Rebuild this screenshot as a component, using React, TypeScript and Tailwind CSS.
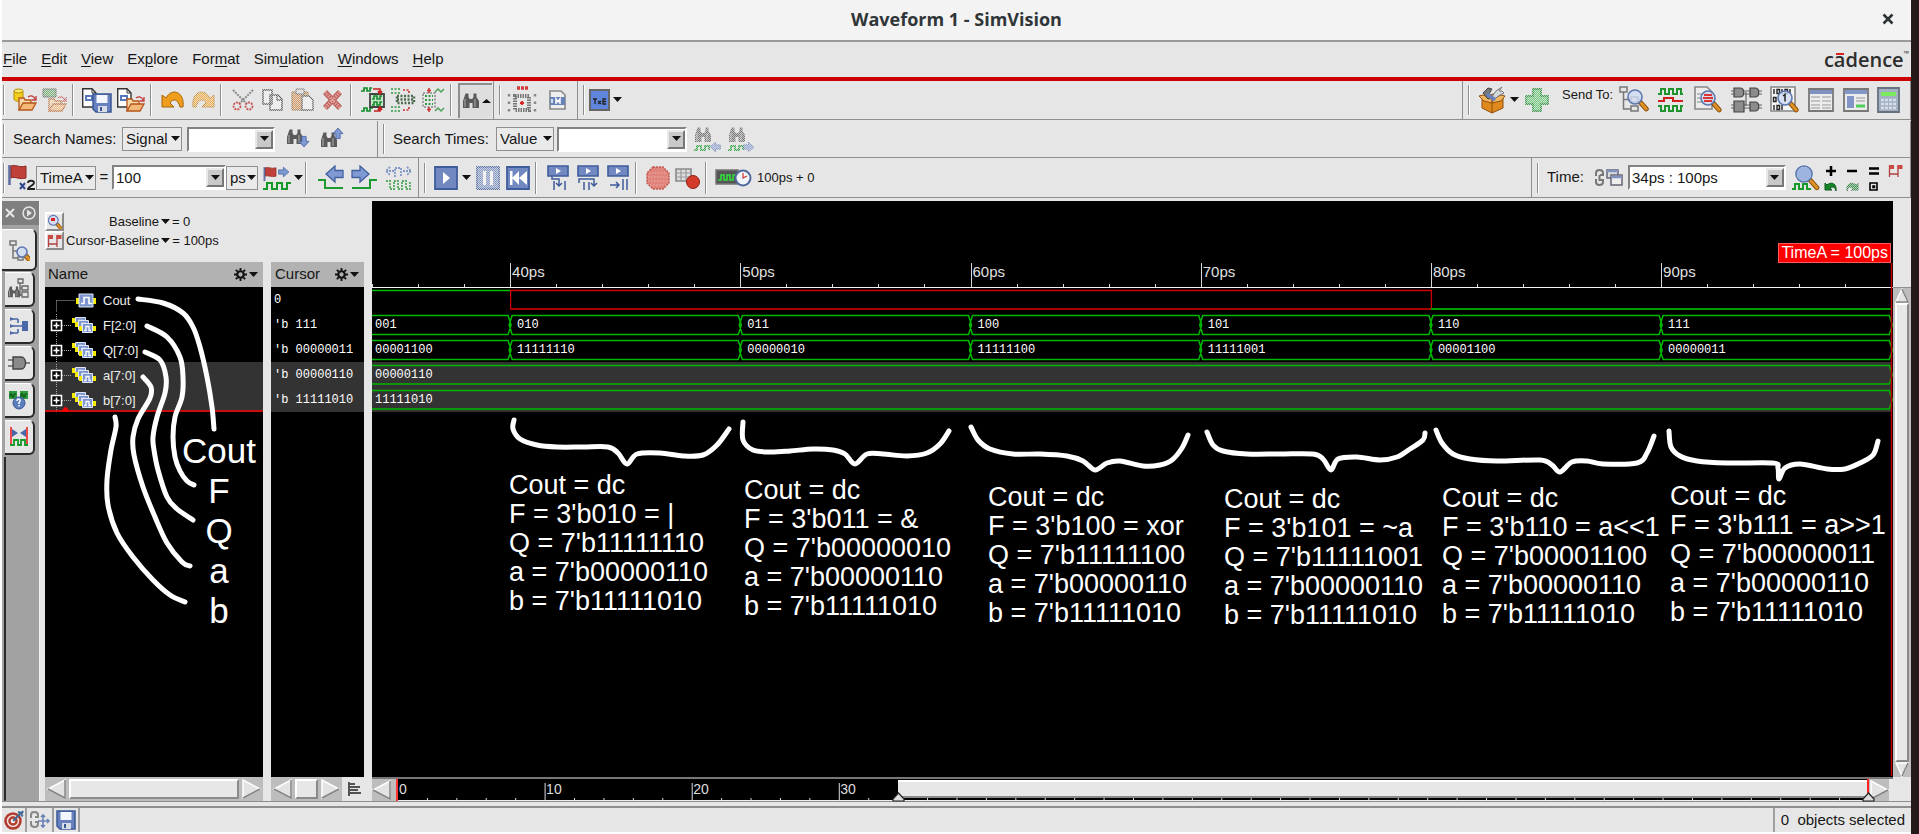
import React from "react";

type Kids = { children?: React.ReactNode };
type Pt = [number, number];

/* ---------- helpers ---------- */

function smooth(points: Pt[]): string {
  let d = `M${points[0][0]} ${points[0][1]}`;
  for (let i = 0; i < points.length - 1; i++) {
    const p0 = points[Math.max(0, i - 1)];
    const p1 = points[i];
    const p2 = points[i + 1];
    const p3 = points[Math.min(points.length - 1, i + 2)];
    const c1 = [p1[0] + (p2[0] - p0[0]) / 6, p1[1] + (p2[1] - p0[1]) / 6];
    const c2 = [p2[0] - (p3[0] - p1[0]) / 6, p2[1] - (p3[1] - p1[1]) / 6];
    d += ` C${c1[0]} ${c1[1]} ${c2[0]} ${c2[1]} ${p2[0]} ${p2[1]}`;
  }
  return d;
}

function Svg({ w, h, dim, children }: Kids & { w: number; h: number; dim?: boolean }) {
  return (
    <svg width={w} height={h} viewBox={`0 0 ${w} ${h}`} fill="none" aria-hidden="true" className="shrink-0">
      {dim ? <g mask="url(#dither)">{children}</g> : children}
    </svg>
  );
}

/* ---------- drawing parts ---------- */

const Folder = ({ x, y }: { x: number; y: number }) => (
  <g transform={`translate(${x} ${y})`}>
    <path d="M1 14V2h5l1 2h6v3" fill="#f9d9a8" stroke="#b5551a" strokeWidth="1.3" />
    <path d="M1 14L5 7h13l-4 7z" fill="#f4b878" stroke="#b5551a" strokeWidth="1.3" />
    <path d="M10 1c3-2 6-1 7 2m1-3v4h-4" stroke="#c23b3b" strokeWidth="1.3" />
  </g>
);

const Page = ({ x, y }: { x: number; y: number }) => (
  <g transform={`translate(${x} ${y})`}>
    <path d="M.7 .7H10L14 5v14H.7z" fill="#fff" stroke="#333" strokeWidth="1.4" />
    <path d="M10 .7V5h4" stroke="#333" />
    <path d="M3 7h8v6H3z" fill="#5577bb" />
    <path d="M5 9v2h4V9z" fill="#fff" />
  </g>
);

const Disk = ({ x, y, s = 1 }: { x: number; y: number; s?: number }) => (
  <g transform={`translate(${x} ${y}) scale(${s})`}>
    <path d="M1 1h18v18H4l-3-3z" fill="#6681bd" stroke="#3a5795" strokeWidth="1.5" />
    <path d="M4.500 2h11v8h-11z" fill="#f3f6fc" />
    <path d="M6 13h9v6H6z" fill="#d9dde6" />
    <path d="M8 14h2v4H8z" fill="#3a5795" />
  </g>
);

const Lens = ({ x, y, r = 7 }: { x: number; y: number; r?: number }) => (
  <g transform={`translate(${x} ${y})`}>
    <path d={`M${r * 0.8} ${r * 0.8}L${r * 1.6} ${r * 1.7}`} stroke="#8a4d0c" strokeWidth="5" strokeLinecap="round" />
    <path d={`M${r * 0.9} ${r * 0.9}L${r * 1.6} ${r * 1.7}`} stroke="#dd9124" strokeWidth="3" strokeLinecap="round" />
    <circle r={r} fill="#cfdcf3" fillOpacity=".8" stroke="#5c76b0" strokeWidth="1.6" />
  </g>
);

const Glasses = ({ x, y }: { x: number; y: number }) => (
  <g transform={`translate(${x} ${y})`} fill="#5a5a5a">
    <path d="M2.500 .500h3v3.500l1 1.500v9.500H0V8z" />
    <path d="M10.500 .500h3v3.500L16 8v7H9.500V5.500l1-1.500z" />
    <path d="M6 6h4v4H6z" />
    <path d="M2 6v8M12 6v8" stroke="#a2a2a2" strokeWidth="1.200" />
  </g>
);

const FatArrow = ({ x, y, a = 0, s = 1 }: { x: number; y: number; a?: number; s?: number }) => (
  <path
    transform={`translate(${x} ${y}) rotate(${a}) scale(${s})`}
    d="M-9-3.500H-1V-8L8 0L-1 8V3.500H-9z"
    fill="#7f9ad2"
    stroke="#42609f"
    strokeWidth="1.300"
  />
);

const Flag = ({ x, y }: { x: number; y: number }) => (
  <g transform={`translate(${x} ${y})`}>
    <path d="M1.500 0V20" stroke="#5d6fa3" strokeWidth="2.600" />
    <path d="M3 1c4-2 8 2 15 0v12c-7 2-11-2-15 0z" fill="#bf4038" stroke="#8d2a26" />
  </g>
);

const Tree = () => (
  <path
    d="M1 1h7v5H1zM12 11h7v5h-7zM12 20h7v5h-7zM4.500 6v17H12M4.500 13.500H12"
    fill="none"
    stroke="#777"
    strokeWidth="1.500"
  />
);

const Caret = ({ up }: { up?: boolean }) => (
  <svg width="9" height="6" viewBox="0 0 9 6" aria-hidden="true" className="shrink-0">
    <path d={up ? "M0 5L4.500 1L9 5z" : "M0 0H9L4.500 5z"} fill="#111" />
  </svg>
);

/* ---------- toolbar icons ---------- */

const icons = {
  openDb: (
    <Svg w={26} h={26}>
      <path d="M2 4v8c0 3 9 3 9 0V4" fill="#f2cf1c" stroke="#b18a00" />
      <ellipse cx="6.500" cy="4" rx="4.500" ry="2" fill="#fbe96b" stroke="#b18a00" />
      <Folder x={6} y={9} />
    </Svg>
  ),
  openWave: (
    <Svg w={26} h={26} dim>
      <path d="M1 2h13v8H1z" fill="#62a862" stroke="#444" />
      <Folder x={6} y={10} />
    </Svg>
  ),
  saveAs: (
    <Svg w={32} h={27}>
      <Page x={1} y={1} />
      <Disk x={11} y={6} />
    </Svg>
  ),
  openPage: (
    <Svg w={32} h={27}>
      <Page x={2} y={1} />
      <Folder x={11} y={10} />
    </Svg>
  ),
  undo: (
    <Svg w={24} h={22}>
      <path d="M1 6v12h12l-4-4c3-5 8-4 10 4h3C24 3 11-2 5 9z" fill="#ef9d1c" stroke="#a9650a" />
    </Svg>
  ),
  redo: (
    <Svg w={24} h={22} dim>
      <path d="M23 6v12H11l4-4c-3-5-8-4-10 4H2C0 3 13-2 19 9z" fill="#f2a62c" stroke="#b0700f" />
    </Svg>
  ),
  cut: (
    <Svg w={24} h={24}>
      <path d="M2 2l14 14M22 2L8 16" stroke="#8a8a8a" strokeWidth="2" strokeDasharray="2 1" />
      <circle cx="6" cy="18" r="3.500" stroke="#c75555" strokeWidth="1.800" strokeDasharray="2 1" />
      <circle cx="18" cy="18" r="3.500" stroke="#c75555" strokeWidth="1.800" strokeDasharray="2 1" />
    </Svg>
  ),
  copy: (
    <Svg w={24} h={24} dim>
      <path d="M2 2h9v14H2zM9 7h8l4 4v11H9z" fill="#f6f6f6" stroke="#333" strokeWidth="1.500" />
      <path d="M16 7v5h5" stroke="#333" strokeWidth="1.300" />
    </Svg>
  ),
  paste: (
    <Svg w={24} h={24} dim>
      <path d="M1 4h16v18H1z" fill="#cf8a48" stroke="#8a5522" />
      <path d="M5 1h8v5H5z" fill="#ddd" stroke="#444" />
      <path d="M11 8h7l4 4v10H11z" fill="#f6f6f6" stroke="#444" strokeWidth="1.500" />
    </Svg>
  ),
  remove: (
    <Svg w={22} h={22}>
      <path d="M3 3l15 16M18 3L3 19" stroke="#b95f5a" strokeWidth="5.500" />
      <path d="M3 3l15 16M18 3L3 19" stroke="#e29c98" strokeWidth="3.500" strokeDasharray="1.500 1" />
    </Svg>
  ),
  waveIn: (
    <Svg w={26} h={26}>
      <path d="M1 4h3V1h3v3h3V1h2M1 24h3v-3h3v3h3v-3h3" stroke="#128a2c" strokeWidth="1.700" />
      <path d="M10 7h14v13H10z" fill="#c9e6cb" stroke="#444" strokeWidth="1.800" />
      <path d="M12 12h2V9h3v3h3V9h2M12 18h2v-3h3v3h3v-3h2" stroke="#128a2c" strokeWidth="1.600" />
      <path d="M13 2h7v4m-2-2l2 3l2-3M14 24h6v-3m-2 2l2-3l2 3" stroke="#c81e1e" strokeWidth="1.600" />
    </Svg>
  ),
  waveMid: (
    <Svg w={26} h={26}>
      <g strokeDasharray="2 1.500" strokeWidth="1.600">
        <path d="M1 2h10M1 6h10M1 20h10M1 24h10" stroke="#2f9a3f" />
        <path d="M13 3h6v4M13 23h6v-4" stroke="#c93030" />
        <path d="M7 9h17v7H7zM7 12.500h17" stroke="#4c6b4f" strokeWidth="2.500" />
      </g>
    </Svg>
  ),
  waveOut: (
    <Svg w={26} h={26}>
      <path d="M3 6h12v14H3z" stroke="#888" strokeWidth="1.500" strokeDasharray="2 1.500" />
      <path d="M5 9h8M5 13h8M5 17h8" stroke="#2f9a3f" strokeWidth="2" strokeDasharray="2 1.500" />
      <path d="M15 5l3-3l3 3l3-3M15 24l3-3l3 3l3-3" stroke="#4aa257" strokeWidth="1.500" />
      <path d="M9 1v5M7 3.500h4M9 20v5M7 22.500h4" stroke="#c93030" strokeWidth="1.500" />
    </Svg>
  ),
  glasses: (
    <Svg w={18} h={18}>
      <Glasses x={1} y={1} />
    </Svg>
  ),
  chip: (
    <Svg w={30} h={30}>
      <path d="M10 3h11" stroke="#cf3a3a" strokeWidth="3.500" strokeDasharray="3 1" />
      <path d="M8 11h14v14H8z" stroke="#777" strokeWidth="4" strokeDasharray="1.500 1" />
      <path d="M2 9v20M28 9v20" stroke="#888" strokeWidth="2.500" strokeDasharray="2.500 5" />
      <path d="M15 16v4M13 18h4" stroke="#d22" strokeWidth="1.800" />
    </Svg>
  ),
  mPage: (
    <Svg w={18} h={22}>
      <path d="M1 2h11l4 4v14H1z" fill="#eee" stroke="#888" strokeWidth="1.600" />
      <path d="M1 8h15v8H1z" fill="#6783b8" />
      <path d="M3 10v4M7 15v-5l2 3l2-3v5" stroke="#fff" strokeWidth="1.500" />
    </Svg>
  ),
  box: (
    <Svg w={28} h={28}>
      <path d="M4 12L15 8l10 4v10l-11 5L4 22z" fill="#e08a1e" stroke="#91500c" />
      <path d="M1 10l5 5 8 2V13L5 9zM27 10l-4 5-9 2V13l9-4z" fill="#f2b65f" stroke="#91500c" />
      <path d="M5 7l5-5 4 1-3 5 3 4-4 1z" fill="#777" stroke="#444" />
      <path d="M24 1l-3 4h3l2 2-4 2-7 5-2-2 5-7z" fill="#d5d8dc" stroke="#777" />
      <path d="M9 8l8 6" stroke="#6a80b8" strokeWidth="4" />
      <path d="M14 17v10" stroke="#91500c" />
    </Svg>
  ),
  plus: (
    <Svg w={26} h={26} dim>
      <path d="M9 2h8v7h7v8h-7v7H9v-7H2V9h7z" fill="#5bc768" stroke="#138a2b" strokeWidth="1.800" />
    </Svg>
  ),
  treeLens: (
    <Svg w={30} h={28}>
      <Tree />
      <Lens x={16} y={11} r={7} />
    </Svg>
  ),
  waves: (
    <Svg w={27} h={26}>
      <g strokeWidth="2">
        <path d="M1 7h3V2h4v5h4V2h4v5h4V2h4v5h2" stroke="#1d9430" />
        <path d="M1 14h6v-3h9v3h10" stroke="#cf2020" />
        <path d="M1 19h3v5h4v-5h4v5h4v-5h4v5h4v-5h2" stroke="#1d9430" />
      </g>
    </Svg>
  ),
  pageLens: (
    <Svg w={30} h={28}>
      <path d="M2 1h12l5 5v17H2z" fill="#ececec" stroke="#888" strokeWidth="1.600" />
      <path d="M4 8h10M4 12h10M4 16h8" stroke="#888" />
      <Lens x={15} y={12} r={7} />
      <path d="M11 9h8M10 12h10M11 15h8" stroke="#d33" strokeWidth="2" />
    </Svg>
  ),
  gates: (
    <Svg w={31} h={28}>
      <path d="M0 5h31M0 8h31M0 19h31M0 22h31M15 6v14" stroke="#666" strokeWidth="1.200" />
      <g fill="#8c8c8c" stroke="#444" strokeWidth="1.200">
        <path d="M3 2h6c5 0 5 9 0 9H3zM19 2h5c5 0 5 9 0 9h-5z" />
        <path d="M3 15h10v11H3zM19 16h5c5 0 5 9 0 9h-5z" />
      </g>
    </Svg>
  ),
  bits: (
    <Svg w={30} h={28}>
      <path d="M1 1h24v24H1z" fill="#f5f5f5" stroke="#888" strokeWidth="1.600" />
      <g stroke="#222" strokeWidth="1.400">
        <path d="M4 3v5M12 3v5M20 3v5M4 19v5M12 19v5" />
        <path d="M7 3.500h2.500v4H7zM15 3.500h2.500v4H15zM3.500 11.500H6v4H3.500zM7 19.500h2.500v4H7z" />
      </g>
      <Lens x={15} y={12} r={7} />
      <path d="M13 10l2-1.500v7" stroke="#222" strokeWidth="1.500" />
    </Svg>
  ),
  listWin: (
    <Svg w={26} h={24}>
      <path d="M1 1h24v22H1z" fill="#ececec" stroke="#777" strokeWidth="1.800" />
      <path d="M2 2h22v4H2z" fill="#7f93be" />
      <path d="M3 9h9M3 13h9M3 17h9M3 20h9M14 9h9M14 13h9M14 17h9M14 20h9" stroke="#999" />
    </Svg>
  ),
  formWin: (
    <Svg w={26} h={24}>
      <path d="M1 1h24v22H1z" fill="#ececec" stroke="#777" strokeWidth="1.800" />
      <path d="M2 2h22v4H2zM4 8h7v12H4z" fill="#8297c8" />
      <path d="M13 10h9M13 13h9" stroke="#999" />
      <path d="M13 18h9" stroke="#4fcf5a" strokeWidth="3" />
    </Svg>
  ),
  calc: (
    <Svg w={23} h={26}>
      <path d="M1 1h21v24H1z" fill="#a3b1c2" stroke="#66717f" strokeWidth="1.800" />
      <path d="M4 5h15v4H4z" fill="#7bea5f" />
      <path d="M4 13h15M4 17h15M4 21h15" stroke="#d5dde8" strokeWidth="2.500" strokeDasharray="3 1" />
    </Svg>
  ),
  findDown: (
    <Svg w={24} h={24}>
      <Glasses x={0} y={2} />
      <FatArrow x={17} y={15} a={90} s={0.62} />
    </Svg>
  ),
  findUp: (
    <Svg w={24} h={24}>
      <Glasses x={0} y={5} />
      <FatArrow x={17} y={6} a={-90} s={0.62} />
    </Svg>
  ),
  findPrev: (
    <Svg w={30} h={28} dim>
      <Glasses x={2} y={2} />
      <path d="M1 25h3v-4h4v4h4v-4h4v4" stroke="#169a2c" strokeWidth="2" />
      <FatArrow x={22} y={22} a={180} s={0.6} />
    </Svg>
  ),
  findNext: (
    <Svg w={30} h={28} dim>
      <Glasses x={2} y={2} />
      <path d="M1 25h3v-4h4v4h4v-4h4v4" stroke="#169a2c" strokeWidth="2" />
      <FatArrow x={22} y={22} s={0.6} />
    </Svg>
  ),
  flagWave: (
    <Svg w={30} h={26}>
      <g transform="scale(.7)">
        <Flag x={2} y={3} />
      </g>
      <FatArrow x={22} y={7} s={0.6} />
      <path d="M1 24h4v-6h5v6h5v-6h5v6h5v-6h4" stroke="#159a28" strokeWidth="2" />
    </Svg>
  ),
  edgePrev: (
    <Svg w={27} h={26}>
      <path d="M1 15h7v8h18" stroke="#1d9a30" strokeWidth="2" />
      <FatArrow x={17} y={9} a={180} />
    </Svg>
  ),
  edgeNext: (
    <Svg w={27} h={26}>
      <path d="M1 23h18v-8h7" stroke="#1d9a30" strokeWidth="2" />
      <FatArrow x={10} y={9} />
    </Svg>
  ),
  waveSpan: (
    <Svg w={29} h={26}>
      <path d="M6 2L2 6l4 4M2 6h8M23 2l4 4l-4 4M19 6h8M11 12V3h6v9" stroke="#7f97c6" strokeWidth="1.800" strokeDasharray="2 1" />
      <path d="M2 16h4v8h4v-8h4v8h4v-8h4v8h4v-8" stroke="#56ab63" strokeWidth="1.800" strokeDasharray="2 1" />
    </Svg>
  ),
  play: (
    <Svg w={24} h={24}>
      <path d="M1 1h22v22H1z" fill="#7189c0" stroke="#3f5c9c" strokeWidth="1.800" />
      <path d="M9 6l7 6l-7 6z" fill="#fff" />
    </Svg>
  ),
  pause: (
    <Svg w={24} h={24} dim>
      <path d="M1 1h22v22H1z" fill="#7189c0" stroke="#3f5c9c" strokeWidth="1.800" />
      <path d="M7 5h3v14H7zM14 5h3v14h-3z" fill="#fff" />
    </Svg>
  ),
  rewind: (
    <Svg w={24} h={24}>
      <path d="M1 1h22v22H1z" fill="#7189c0" stroke="#3f5c9c" strokeWidth="1.800" />
      <path d="M4 5h2.500v14H4zM13 5v14l-7-7zM21 5v14l-8-7z" fill="#fff" />
    </Svg>
  ),
  step1: (
    <Svg w={22} h={26}>
      <path d="M1 1h20v10H1z" fill="#7189c0" stroke="#3f5c9c" strokeWidth="1.600" />
      <path d="M9 3l5 3l-5 3z" fill="#fff" />
      <path d="M5 11v3h7v7m-3-3l3 3l3-3M7 16v9M18 16v9" stroke="#3f5c9c" strokeWidth="1.500" />
    </Svg>
  ),
  step2: (
    <Svg w={22} h={26}>
      <path d="M1 1h20v10H1z" fill="#7189c0" stroke="#3f5c9c" strokeWidth="1.600" />
      <path d="M9 3l5 3l-5 3z" fill="#fff" />
      <path d="M2 18v-4h15v7m-3-3l3 3l3-3M7 17v8M12 17v8" stroke="#3f5c9c" strokeWidth="1.500" />
    </Svg>
  ),
  step3: (
    <Svg w={22} h={26}>
      <path d="M1 1h20v10H1z" fill="#7189c0" stroke="#3f5c9c" strokeWidth="1.600" />
      <path d="M9 3l5 3l-5 3z" fill="#fff" />
      <path d="M3 20h9m-3-3l3 3l-3 3M16 14v11M20 14v11" stroke="#3f5c9c" strokeWidth="1.500" />
    </Svg>
  ),
  stop: (
    <Svg w={24} h={24}>
      <path d="M7 1h10l6 6v10l-6 6H7l-6-6V7z" fill="#df837b" stroke="#c05a52" strokeWidth="1.500" strokeDasharray="2 1" />
      <path d="M3 7h18M2 11h20M2 15h20M4 19h16" stroke="#eeb2ac" strokeDasharray="1.500 1.500" />
    </Svg>
  ),
  breaks: (
    <Svg w={26} h={24}>
      <path d="M1 3h15v12H1z" fill="#ddd" stroke="#888" strokeWidth="1.600" />
      <path d="M6 3v12M11 3v12M1 7h15M1 11h15" stroke="#999" strokeWidth="1.200" />
      <circle cx="18" cy="16" r="6.500" fill="#d33b2b" stroke="#8f1f16" />
    </Svg>
  ),
  simClock: (
    <Svg w={38} h={20}>
      <path d="M1 2h22v14H1z" fill="#555" stroke="#777" strokeWidth="1.500" />
      <path d="M3 12h3V7h3v5h3V7h3v5h3V7h3" stroke="#2fe03a" strokeWidth="1.600" />
      <circle cx="28" cy="10" r="7.500" fill="#f0f4fb" stroke="#51699c" strokeWidth="2" />
      <path d="M28 5v5l4-2" stroke="#c33" strokeWidth="1.200" />
    </Svg>
  ),
  link: (
    <Svg w={29} h={20}>
      <path d="M2 8V5c0-4 7-4 7 0v2H6M2 11v3c0 4 7 4 7 0v-2H6M5.500 7v6" stroke="#777" strokeWidth="2" />
      <path d="M13 2h11v8H13z" fill="#ddd" stroke="#667" strokeWidth="1.500" />
      <path d="M17 7h11v10H17z" fill="#eee" stroke="#667" strokeWidth="1.500" />
      <path d="M13 3h11M17 9h11" stroke="#7f93be" strokeWidth="2.500" />
    </Svg>
  ),
  zoomWave: (
    <Svg w={29} h={28}>
      <path d="M1 25h3v-5h4v5h4v-5h4v5h4" stroke="#179a2a" strokeWidth="2" />
      <Lens x={13} y={10} r={8} />
      <circle cx="13" cy="10" r="7" fill="#9db4e0" />
    </Svg>
  ),
  bracket: (
    <Svg w={15} h={14}>
      <path d="M1.500 13V1M10 13V1M1 10h9" stroke="#b04040" strokeWidth="1.300" />
      <path d="M1 1h5v4H1zM9.500 1h5v4h-5z" fill="#c94a42" />
    </Svg>
  ),
  target: (
    <Svg w={20} h={20}>
      <circle cx="9" cy="11" r="7.500" fill="#f3dcd8" stroke="#b23c30" strokeWidth="2.500" />
      <circle cx="9" cy="11" r="3.500" fill="#fff" stroke="#b23c30" strokeWidth="2.500" />
      <path d="M9 11l8-8M14 2l4 1l1-2M17 5l2 1" stroke="#3d6a96" strokeWidth="2" />
    </Svg>
  ),
  relink: (
    <Svg w={22} h={20}>
      <path d="M2 8V5c0-4 7-4 7 0v2H6M2 11v3c0 4 7 4 7 0v-2H6" stroke="#888" strokeWidth="2" />
      <path d="M14 6v10M9 11h10M12 7l2-2l2 2M12 15l2 2l2-2M18 9l2 2l-2 2" stroke="#6b82b4" strokeWidth="1.600" />
    </Svg>
  ),
  disk: (
    <Svg w={22} h={22}>
      <Disk x={1} y={1} />
    </Svg>
  ),
};

/* ---------- controls ---------- */

function Tool({ label, wide, children }: Kids & { label: string; wide?: boolean }) {
  return (
    <button
      type="button"
      aria-label={label}
      className={`flex h-8 shrink-0 items-center justify-center ${wide ? "w-[34px]" : "w-[30px]"}`}
    >
      {children}
    </button>
  );
}

const Grip = () => <span className="ml-px h-[30px] w-0.5 shrink-0 border-r border-white bg-[#8e8e8e]" />;
const Sep = () => <span className="mr-1.5 ml-0.5 h-8 w-0.5 shrink-0 border-r border-white bg-[#8e8e8e]" />;

function Bar({ className, children }: Kids & { className: string }) {
  return (
    <div className={`flex h-full shrink-0 items-center border-r border-[#8e8e8e] ${className}`}>
      <Grip />
      {children}
    </div>
  );
}

function Choice({ id, label, value, className }: { id: string; label?: string; value: string; className: string }) {
  return (
    <span className={`relative flex h-6 shrink-0 items-center ${className}`}>
      <select
        id={id}
        aria-label={label}
        className="h-full w-full appearance-none border border-[#8f8f8f] bg-[#eaeaea] pl-[3px] text-[15px] leading-5"
      >
        <option>{value}</option>
      </select>
      <span className="pointer-events-none absolute right-0.5">
        <Caret />
      </span>
    </span>
  );
}

function Combo({ id, label, value, className }: { id: string; label?: string; value?: string; className: string }) {
  return (
    <span
      className={`flex h-[25px] shrink-0 items-center border-2 border-t-[#828282] border-r-white border-b-white border-l-[#828282] bg-white ${className}`}
    >
      <input id={id} aria-label={label} defaultValue={value} className="w-full min-w-0 bg-white pl-0.5 text-[15px] leading-5 outline-none" />
      <button
        type="button"
        aria-label="Show list"
        className="flex h-[19px] w-[18px] shrink-0 items-center justify-center border-2 border-t-[#e8e8e8] border-r-[#777] border-b-[#777] border-l-[#e8e8e8] bg-[#c9c9c9]"
      >
        <Caret />
      </button>
    </span>
  );
}

const menus: [string, string, string][] = [
  ["", "F", "ile"],
  ["", "E", "dit"],
  ["", "V", "iew"],
  ["Ex", "p", "lore"],
  ["For", "m", "at"],
  ["Sim", "u", "lation"],
  ["", "W", "indows"],
  ["", "H", "elp"],
];

/* ---------- scroll bars ---------- */

type Dir = "left" | "right" | "up" | "down";
const arrowShape: Record<Dir, string> = {
  left: "M18 1V19L1 10z",
  right: "M2 1V19L19 10z",
  up: "M7 1L13 14H1z",
  down: "M1 1H13L7 14z",
};
const arrowShade: Record<Dir, string> = {
  left: "M18 1V19L1 10",
  right: "M2 19L19 10",
  up: "M7 1L13 14H1",
  down: "M13 1L7 14",
};

function ArrowButton({ dir }: { dir: Dir }) {
  const flat = dir === "left" || dir === "right";
  return (
    <button type="button" aria-label={`Scroll ${dir}`} className="flex shrink-0 items-center justify-center">
      <svg width={flat ? 20 : 14} height={flat ? 20 : 15} viewBox={flat ? "0 0 20 20" : "0 0 14 15"} aria-hidden="true">
        <path d={arrowShape[dir]} fill="#e3e3e3" stroke="#fff" strokeWidth="1.500" />
        <path d={arrowShade[dir]} fill="none" stroke="#808080" strokeWidth="1.500" />
      </svg>
    </button>
  );
}

const raised = "border-2 border-t-white border-r-[#8a8a8a] border-b-[#8a8a8a] border-l-white bg-[#e7e7e7]";

/* ---------- data ---------- */

const signals = [
  { name: "Cout", value: "0", bus: false, marked: false },
  { name: "F[2:0]", value: "'b 111", bus: true, marked: false },
  { name: "Q[7:0]", value: "'b 00000011", bus: true, marked: false },
  { name: "a[7:0]", value: "'b 00000110", bus: true, marked: true },
  { name: "b[7:0]", value: "'b 11111010", bus: true, marked: true },
];

const pointerStrokes: Pt[][] = [
  [[138, 299], [163, 303], [183, 313], [193, 327], [200, 347], [207, 377], [212, 407], [214, 429]],
  [[147, 326], [167, 337], [180, 357], [183, 377], [182, 397], [175, 417], [173, 437], [175, 457], [180, 471], [187, 481], [194, 485]],
  [[145, 352], [160, 360], [166, 377], [165, 393], [157, 417], [153, 437], [154, 450], [158, 470], [167, 497], [177, 509], [193, 520]],
  [[143, 377], [151, 387], [150, 398], [138, 419], [133, 437], [134, 455], [143, 487], [155, 517], [167, 543], [182, 562], [190, 566]],
  [[115, 417], [116, 427], [111, 450], [107, 480], [108, 505], [117, 533], [133, 557], [153, 580], [170, 595], [185, 602]],
];

const braceStrokes: Pt[][] = [
  [[514, 420], [513, 429], [520, 439], [537, 445], [557, 447], [583, 447], [608, 447], [618, 453], [627, 464], [637, 454], [660, 453], [683, 456], [703, 455], [717, 445], [729, 429]],
  [[743, 422], [743, 440], [753, 450], [770, 452], [790, 451], [813, 449], [833, 450], [845, 454], [855, 464], [867, 454], [883, 454], [907, 456], [927, 453], [940, 444], [949, 431]],
  [[971, 427], [978, 440], [990, 449], [1013, 454], [1040, 454], [1067, 456], [1083, 461], [1095, 470], [1107, 463], [1120, 461], [1143, 466], [1160, 465], [1172, 460], [1182, 448], [1188, 435]],
  [[1207, 432], [1213, 445], [1223, 451], [1247, 454], [1280, 454], [1313, 454], [1323, 459], [1331, 470], [1338, 459], [1357, 457], [1380, 460], [1397, 457], [1410, 449], [1423, 440], [1425, 433]],
  [[1436, 430], [1442, 443], [1453, 454], [1470, 459], [1497, 461], [1540, 460], [1552, 465], [1560, 472], [1572, 462], [1587, 461], [1603, 464], [1637, 463], [1647, 453], [1654, 436]],
  [[1669, 431], [1671, 447], [1680, 456], [1697, 461], [1727, 463], [1773, 463], [1778, 468], [1779, 479], [1785, 468], [1800, 464], [1827, 469], [1845, 469], [1860, 463], [1873, 455], [1878, 441]],
];

const notes = [
  { x: 137, y: 270, f: "3'b010 = |", q: "7'b11111110" },
  { x: 372, y: 275, f: "3'b011 = &", q: "7'b00000010" },
  { x: 616, y: 282, f: "3'b100 = xor", q: "7'b11111100" },
  { x: 852, y: 284, f: "3'b101 = ~a", q: "7'b11111001" },
  { x: 1070, y: 283, f: "3'b110 = a<<1", q: "7'b00001100" },
  { x: 1298, y: 281, f: "3'b111 = a>>1", q: "7'b00000011" },
];

const SPAN = 1521;
const START = 34;
const at = (ps: number) => (ps - START) * 23.02;
const pct = (x: number) => `${(x / SPAN) * 100}%`;

const fValues = ["001", "010", "011", "100", "101", "110", "111"];
const qValues = ["00001100", "11111110", "00000010", "11111100", "11111001", "00001100", "00000011"];
const changes = [34, 40, 50, 60, 70, 80, 90, 100];

function busPath(top: number, bottom: number, edges: number[]): string {
  const mid = (top + bottom) / 2;
  let d = "";
  for (let i = 0; i < edges.length - 1; i++) {
    const a = at(edges[i]);
    const b = at(edges[i + 1]);
    d +=
      i === 0
        ? `M0 ${top}H${b - 2}L${b + 1} ${mid}L${b - 2} ${bottom}H0`
        : `M${a - 1} ${mid}L${a + 2} ${top}H${b - 2}L${b + 1} ${mid}L${b - 2} ${bottom}H${a + 2}z`;
  }
  return d;
}

function WaveCanvas() {
  const ticks: React.ReactNode[] = [];
  for (let t = 34; t <= 98; t += 2) {
    const x = Math.round(at(t)) + 0.5;
    ticks.push(<path key={t} d={`M${x} ${t % 10 ? 83 : 62}V86`} />);
  }
  return (
    <div className="relative min-h-[575px] flex-1 overflow-hidden bg-black">
      <svg
        className="absolute top-0 left-0 h-[575px] w-full"
        viewBox={`0 0 ${SPAN} 575`}
        preserveAspectRatio="none"
        fill="none"
        aria-hidden="true"
      >
        <path d={`M0 161H${SPAN - 1}V211H0z`} fill="#333" />
        <g stroke="#d8d8d8">{ticks}</g>
        <path d={`M0 86.500H${SPAN}`} stroke="#f2f2f2" />
        <path d={`M0 89.500H${at(40)}`} stroke="#00c000" strokeWidth="1.500" />
        <path d={`M${at(40) + 0.5} 108V89.500H${at(80) + 0.5}V108`} stroke="#cc0000" strokeWidth="1.300" />
        <path d={`M${at(40)} 108H${at(80)}`} stroke="#a80000" strokeWidth="2" />
        <path d={`M${at(80)} 108H${at(100)}`} stroke="#009c00" strokeWidth="2" />
        <g stroke="#00b800" strokeWidth="1.500">
          <path d={busPath(114.5, 133.5, changes)} />
          <path d={busPath(139.5, 158.5, changes)} />
          <path d={busPath(164.5, 183, [34, 100])} />
          <path d={busPath(189.5, 208, [34, 100])} />
        </g>
        <path d="M1519.500 62V575" stroke="#c00000" strokeWidth="1.500" />
        <g transform="translate(-372 -201)" stroke="#fff" strokeWidth="5" strokeLinecap="round" strokeLinejoin="round">
          {braceStrokes.map((b, i) => (
            <path key={i} d={smooth(b)} />
          ))}
        </g>
      </svg>

      {[40, 50, 60, 70, 80, 90].map((t) => (
        <span key={t} className="absolute top-[62px] pl-0.5 text-[15px] leading-[18px] text-[#e0e0e0]" style={{ left: pct(at(t)) }}>
          {t}ps
        </span>
      ))}

      <span className="absolute top-[42px] right-[2px] bg-[#ff0000] px-[3px] text-[16px] leading-5 text-white outline-1 -outline-offset-1 outline-[#ff5a5a]">
        TimeA = 100ps
      </span>

      <div className="font-['Liberation_Mono',monospace] text-[12px] leading-[14px] text-white">
        {fValues.map((v, i) => (
          <span key={i} className={`absolute top-[117px] ${i ? "pl-[7px]" : "pl-[3px]"}`} style={{ left: pct(at(changes[i])) }}>
            {v}
          </span>
        ))}
        {qValues.map((v, i) => (
          <span key={i} className={`absolute top-[142px] ${i ? "pl-[7px]" : "pl-[3px]"}`} style={{ left: pct(at(changes[i])) }}>
            {v}
          </span>
        ))}
        <span className="absolute top-[167px] left-0 pl-[3px]">00000110</span>
        <span className="absolute top-[192px] left-0 pl-[3px]">11111010</span>
      </div>

      {notes.map((n) => (
        <div
          key={n.f}
          className="absolute text-[27px] leading-[29px] whitespace-nowrap text-white"
          style={{ left: pct(n.x), top: n.y }}
        >
          <p>Cout = dc</p>
          <p>F = {n.f}</p>
          <p>Q = {n.q}</p>
          <p>a = 7'b00000110</p>
          <p>b = 7'b11111010</p>
        </div>
      ))}
    </div>
  );
}

function Overview() {
  return (
    <div className="flex h-6 shrink-0 items-center border-t-2 border-[#777] bg-[#bdbdbd]">
      <ArrowButton dir="left" />
      <div className="relative ml-1 h-full flex-1 border-l-2 border-[#f33] bg-black text-[14px] leading-5 text-[#ddd]">
        <svg className="absolute inset-0 h-full w-full" viewBox="0 0 1471 22" preserveAspectRatio="none" aria-hidden="true">
          <path d="M0 21.500H1471" stroke="#eee" />
          {Array.from({ length: 49 }, (_, i) => (
            <path key={i} d={`M${(i + 1) * 29.42} ${(i + 1) % 5 || i > 16 ? 19 : 4}V22`} stroke="#ddd" />
          ))}
        </svg>
        <span className="absolute left-0 pl-px">0</span>
        <span className="absolute left-[10%] pl-px">10</span>
        <span className="absolute left-[20%] pl-px">20</span>
        <span className="absolute left-[30%] pl-px">30</span>
        <div className="absolute top-px right-0 left-[34%] h-[18px] border-t-2 border-b-2 border-t-white border-b-[#8a8a8a] bg-[#e7e7e7]" />
        <svg className="absolute -bottom-px left-[34%] -ml-1.5" width="13" height="10" viewBox="0 0 13 10" aria-hidden="true">
          <path d="M6.500 1L12 7v2H1V7z" fill="#ddd" stroke="#222" strokeWidth="1.200" />
        </svg>
        <span className="absolute top-0 right-0 h-3.5 w-0.5 bg-[#f22]" />
        <svg className="absolute -right-1.5 -bottom-px" width="13" height="10" viewBox="0 0 13 10" aria-hidden="true">
          <path d="M6.500 1L12 7v2H1V7z" fill="#ddd" stroke="#222" strokeWidth="1.200" />
        </svg>
      </div>
      <ArrowButton dir="right" />
      <span className="h-full w-1 bg-[#e7e7e7]" />
    </div>
  );
}

/* ---------- signal list ---------- */

const Box = ({ x, y }: { x: number; y: number }) => (
  <g transform={`translate(${x} ${y})`}>
    <path d="M.500 .500h10v9H.500z" fill="#7d95cf" stroke="#dfe6f6" />
    <path d="M2 7.500h2v-4h3v4h2" stroke="#fff" strokeWidth="1.300" fill="none" />
  </g>
);

function SignalRow({ name, bus, marked }: { name: string; bus: boolean; marked: boolean }) {
  return (
    <li className={`flex h-[25px] items-center pt-0.5 text-[13px] leading-4 text-[#eee] ${marked ? "bg-[#333]" : ""}`}>
      <svg width="58" height="23" viewBox="0 0 58 23" fill="none" aria-hidden="true" className="shrink-0">
        <path d={bus ? "M11.500 0V23M17 11.500H27" : "M11.500 11.500V23M11.500 11.500H30"} stroke="#aaa" strokeDasharray="1 1" />
        {bus ? (
          <>
            <path d="M6.500 6.500h10v10h-10z" fill="#000" stroke="#fff" strokeWidth="1.600" />
            <path d="M8.500 11.500h6M11.500 8.500v6" stroke="#fff" strokeWidth="1.600" />
            <Box x={30} y={3} />
            <Box x={33} y={6} />
            <Box x={37} y={9} />
            <path d="M27 4h3v5h-3zM30 8h3v5h-3zM34 12h3v5h-3zM48 12h3v5h-3z" fill="#f3ea00" />
          </>
        ) : (
          <>
            <path d="M31 9h3v6h-3zM48 9h3v6h-3z" fill="#f3ea00" />
            <path d="M34 5h14v13H34z" fill="#7d95cf" stroke="#dfe6f6" />
            <path d="M36 14.500h3v-6h5v6h3" stroke="#fff" strokeWidth="1.600" />
          </>
        )}
      </svg>
      {name}
    </li>
  );
}

const GearMenu = ({ label }: { label: string }) => (
  <button type="button" aria-label={label} className="flex items-center gap-0.5">
    <svg width="13" height="13" viewBox="0 0 14 14" fill="none" aria-hidden="true">
      <circle cx="7" cy="7" r="3.500" stroke="#111" strokeWidth="2.400" />
      <path d="M7 0v3M7 11v3M0 7h3M11 7h3M2 2l2 2M10 10l2 2M12 2l-2 2M4 10l-2 2" stroke="#111" strokeWidth="2" />
    </svg>
    <Caret />
  </button>
);

/* ---------- side tabs ---------- */

const tabs: { label: string; icon: React.ReactNode }[] = [
  {
    label: "Design browser",
    icon: (
      <g>
        <path d="M2 2h6v4H2zM5 6v13h5M5 12h4M10 18h5v3h-5z" stroke="#777" strokeWidth="1.500" />
        <Lens x={14} y={13} r={5} />
      </g>
    ),
  },
  {
    label: "Design search",
    icon: (
      <g>
        <path d="M10 1h5v4h-5zM14 8h6v4h-6zM14 14h6v5h-6zM12 5v13M12 10h2M12 17h2" stroke="#666" strokeWidth="1.300" />
        <g transform="translate(0 8) scale(.75)">
          <Glasses x={0} y={0} />
        </g>
      </g>
    ),
  },
  {
    label: "Signal flow",
    icon: (
      <g>
        <path d="M3 4h7M3 11h14M3 18h7M10 4v4M10 18v-4" stroke="#4a68a8" strokeWidth="1.600" />
        <path d="M2 2l4 2l-4 2zM2 9l4 2l-4 2zM2 16l4 2l-4 2z" fill="#4a68a8" />
        <path d="M14 6h6v10h-6z" fill="#4a68a8" />
      </g>
    ),
  },
  {
    label: "Schematic",
    icon: (
      <g>
        <path d="M0 8h5M0 14h5M16 11h6" stroke="#666" strokeWidth="1.500" />
        <path d="M5 5h8c6 0 6 12 0 12H5z" fill="#8a8a8a" stroke="#444" strokeWidth="1.400" />
      </g>
    ),
  },
  {
    label: "Help on waveforms",
    icon: (
      <g>
        <path d="M1 2h8v8H1zM12 2h8v8h-8z" fill="#2d9a3b" />
        <path d="M2 8V5h2v3h2V5h2M13 8V5h2v3h2V5h2" stroke="#0b4a15" />
        <circle cx="11" cy="14" r="6" fill="#5d7fbe" stroke="#3a5795" />
        <path d="M9 12c0-3 4-2 3 0l-1 2v1M11 16v1.500" stroke="#fff" strokeWidth="1.500" />
      </g>
    ),
  },
  {
    label: "Compare waveforms",
    icon: (
      <g>
        <path d="M3 1v18M19 1v18" stroke="#e22" strokeWidth="1.600" />
        <path d="M2 19h4v-5h4v5h3v-5h4v5h3" stroke="#159a28" strokeWidth="1.800" />
        <path d="M4 3l6 4l-6 4zM18 3l-6 4l6 4z" fill="#4a68a8" />
      </g>
    ),
  },
];

function SideTabs() {
  return (
    <div className="flex w-[38px] shrink-0 flex-col border-r border-[#f2f2f2] bg-[#a2a2a2]">
      <div className="mb-1 flex h-6 items-center justify-around bg-[#7f7f7f]">
        <button type="button" aria-label="Close sidebar">
          <Svg w={10} h={10}>
            <path d="M1 1l8 8M9 1L1 9" stroke="#e6e6e6" strokeWidth="2" />
          </Svg>
        </button>
        <button type="button" aria-label="Expand sidebar">
          <Svg w={14} h={14}>
            <circle cx="7" cy="7" r="6" stroke="#e6e6e6" strokeWidth="1.500" />
            <path d="M5 3.500l5 3.500l-5 3.500z" fill="#e6e6e6" />
          </Svg>
        </button>
      </div>
      {tabs.map((t, i) => (
        <button
          key={t.label}
          type="button"
          aria-label={t.label}
          className={`flex shrink-0 items-center justify-center rounded-r-md border-t border-r-2 border-b-2 border-t-white border-r-[#2a2a2a] border-b-[#2a2a2a] bg-[#e6e6e6] ${
            i === 0 ? "mr-0.5 mb-px h-[42px]" : "mr-1 mb-0.5 ml-[3px] h-[35px]"
          }`}
        >
          <Svg w={22} h={22}>{t.icon}</Svg>
        </button>
      ))}
      <div className="ml-0.5 w-0.5 flex-1 rounded-b bg-[#2a2a2a]" />
    </div>
  );
}

/* ---------- page ---------- */

export default function App() {
  return (
    <div className="flex min-h-screen w-full border-l-2 border-white bg-[#241a1a] font-['Liberation_Sans',Arial,sans-serif] text-[#161616]">
      <svg width="0" height="0" className="absolute" aria-hidden="true">
        <defs>
          <pattern id="ditherCells" width="2" height="2" patternUnits="userSpaceOnUse">
            <path d="M0 0h2v2H0z" fill="#383838" />
            <path d="M0 0h1v1H0zM1 1h1v1H1z" fill="#ccc" />
          </pattern>
          <mask id="dither" maskUnits="userSpaceOnUse" x="0" y="0" width="60" height="60">
            <path d="M0 0h60v60H0z" fill="url(#ditherCells)" />
          </mask>
        </defs>
      </svg>

      <div className="mr-2 flex min-w-0 flex-1 flex-col bg-[#e6e6e6]">
        <header className="relative flex h-[42px] shrink-0 items-center justify-center border-b-2 border-[#9a9a98] bg-[#f3f3f3]">
          <h1 className="pb-0.5 font-['Open_Sans',sans-serif] text-[18px] font-bold text-[#303638]">Waveform 1 - SimVision</h1>
          <button type="button" aria-label="Close window" className="absolute right-[17px] pb-0.5">
            <Svg w={12} h={12}>
              <path d="M1.500 1.500l9 9M10.500 1.500l-9 9" stroke="#2e3436" strokeWidth="2.500" />
            </Svg>
          </button>
        </header>

        <nav className="flex h-[39px] shrink-0 items-center border-b-4 border-[#cc0000] pl-px text-[15px]">
          {menus.map(([a, u, b]) => (
            <button key={a + u + b} type="button" className="mr-3.5">
              {a}
              <span className="underline decoration-1 underline-offset-2">{u}</span>
              {b}
            </button>
          ))}
          <span className="mr-0.5 ml-auto flex font-['Open_Sans',sans-serif] text-[20px] leading-6 font-semibold text-[#2e2e2e]">
            c
            <span className="relative">
              a
              <span className="absolute top-[5px] left-0.5 h-0.5 w-2 bg-[#d22]" />
            </span>
            dence
            <span className="text-[7px] leading-3">™</span>
          </span>
        </nav>

        <div className="flex h-[39px] shrink-0 border-b border-[#8e8e8e]">
          <Bar className="w-[492px]">
            <span className="w-[5px]" />
            <Tool label="Open database">{icons.openDb}</Tool>
            <Tool label="Reload database">{icons.openWave}</Tool>
            <Sep />
            <Tool label="Save command script" wide>{icons.saveAs}</Tool>
            <Tool label="Source command script" wide>{icons.openPage}</Tool>
            <Sep />
            <Tool label="Undo">{icons.undo}</Tool>
            <Tool label="Redo">{icons.redo}</Tool>
            <Sep />
            <Tool label="Cut">{icons.cut}</Tool>
            <Tool label="Copy">{icons.copy}</Tool>
            <Tool label="Paste">{icons.paste}</Tool>
            <Tool label="Delete">{icons.remove}</Tool>
            <Sep />
            <Tool label="Expand wave">{icons.waveIn}</Tool>
            <Tool label="Align wave">{icons.waveMid}</Tool>
            <Tool label="Collapse wave">{icons.waveOut}</Tool>
            <Sep />
            <button
              type="button"
              aria-label="Show search bars"
              className="flex h-[35px] w-[34px] items-center justify-center gap-0.5 border-t-2 border-l-2 border-[#8e8e8e] bg-[#dedede]"
            >
              {icons.glasses}
              <Caret up />
            </button>
          </Bar>
          <Bar className="w-[84px] gap-1 pl-1">
            <Tool label="Select scope" wide>{icons.chip}</Tool>
            <Tool label="Memory page">{icons.mPage}</Tool>
          </Bar>
          <Bar className="min-w-0 flex-1 pl-1">
            <button type="button" aria-label="Text editor" className="ml-1 flex items-center gap-0.5">
              <Svg w={22} h={22}>
                <path d="M1 1h19v20H1z" fill="#5f86dc" stroke="#666" strokeWidth="2" />
                <path d="M4 10h4M6 10v5M9 12l3 3M12 12l-3 3M17 10h-3v5h3M14 12.500h3" stroke="#222" strokeWidth="1.300" />
              </Svg>
              <Caret />
            </button>
          </Bar>
          <Bar className="w-[448px] pl-1">
            <button type="button" aria-label="Toolbox" className="ml-2 flex items-center gap-1">
              {icons.box}
              <Caret />
            </button>
            <span className="w-[3px]" />
            <Tool label="Add">{icons.plus}</Tool>
            <span className="mr-1.5 ml-2.5 pb-2.5 text-[13px]">Send To:</span>
            <div className="flex flex-1 items-center justify-between pr-2.5">
              {(["treeLens", "waves", "pageLens", "gates", "bits", "listWin", "formWin", "calc"] as const).map((k) => (
                <button key={k} type="button" aria-label={`Send to ${k}`}>
                  {icons[k]}
                </button>
              ))}
            </div>
          </Bar>
        </div>

        <div className="flex h-[38px] shrink-0 border-b border-[#8e8e8e] pt-px text-[15px]">
          <Bar className="w-[376px]">
            <label htmlFor="nameKind" className="ml-2 w-[109px]">Search Names:</label>
            <Choice id="nameKind" value="Signal" className="w-[60px]" />
            <Combo id="nameText" label="Search names text" className="ml-[5px] w-[88px]" />
            <span className="w-[7px]" />
            <Tool label="Find next name" wide>{icons.findDown}</Tool>
            <Tool label="Find previous name" wide>{icons.findUp}</Tool>
          </Bar>
          <Bar className="min-w-0 flex-1 pl-1">
            <label htmlFor="timeKind" className="ml-2 w-[103px]">Search Times:</label>
            <Choice id="timeKind" value="Value" className="w-[58px]" />
            <Combo id="timeText" label="Search times text" className="mr-1 ml-[3px] w-[130px]" />
            <Tool label="Find previous time" wide>{icons.findPrev}</Tool>
            <Tool label="Find next time" wide>{icons.findNext}</Tool>
          </Bar>
        </div>

        <div className="flex h-10 shrink-0 border-b border-[#8e8e8e] text-[15px]">
          <Bar className="w-[417px]">
            <button type="button" aria-label="Cursors" className="ml-[3px] flex w-[28px] justify-center">
              <Svg w={28} h={28}>
                <Flag x={0} y={1} />
                <path d="M12 19l5 6M17 19l-5 6" stroke="#2e4a8c" strokeWidth="2" />
                <path d="M20 19c0-3 6-3 6 0c0 2-6 4-6 6h7" stroke="#222" strokeWidth="1.800" />
              </Svg>
            </button>
            <Choice id="cursorName" label="Cursor" value="TimeA" className="w-[60px]" />
            <label htmlFor="cursorTime" className="w-4 text-center">=</label>
            <Combo id="cursorTime" value="100" className="w-[114px]" />
            <Choice id="timeUnit" label="Time unit" value="ps" className="w-[32px]" />
            <button type="button" aria-label="Go to cursor" className="ml-1 flex items-center gap-0.5">
              {icons.flagWave}
              <Caret />
            </button>
            <Sep />
            <Tool label="Previous edge" wide>{icons.edgePrev}</Tool>
            <Tool label="Next edge" wide>{icons.edgeNext}</Tool>
            <Tool label="Edge span" wide>{icons.waveSpan}</Tool>
          </Bar>
          <Bar className="min-w-0 flex-1 pl-1">
            <button type="button" aria-label="Run" className="mr-0.5 ml-2 flex items-center gap-1">
              {icons.play}
              <Caret />
            </button>
            <Tool label="Pause">{icons.pause}</Tool>
            <Tool label="Reset">{icons.rewind}</Tool>
            <Sep />
            <Tool label="Step in">{icons.step1}</Tool>
            <Tool label="Step over">{icons.step2}</Tool>
            <Tool label="Step out">{icons.step3}</Tool>
            <Sep />
            <Tool label="Stop">{icons.stop}</Tool>
            <Tool label="Breakpoints">{icons.breaks}</Tool>
            <Sep />
            <span className="flex items-center gap-1 pl-0.5 text-[13px]">
              {icons.simClock}
              100ps + 0
            </span>
          </Bar>
          <Bar className="w-[379px] pl-1">
            <label htmlFor="range" className="mr-2.5 ml-2">Time:</label>
            {icons.link}
            <Combo id="range" value="34ps : 100ps" className="mx-[5px] w-[158px]" />
            {icons.zoomWave}
            <div className="grid flex-1 grid-cols-4 items-center justify-items-center gap-y-1 pr-1">
              <button type="button" aria-label="Zoom in">
                <Svg w={12} h={12}><path d="M6 1v10M1 6h10" stroke="#000" strokeWidth="2.500" /></Svg>
              </button>
              <button type="button" aria-label="Zoom out">
                <Svg w={12} h={12}><path d="M1 6h10" stroke="#000" strokeWidth="2.500" /></Svg>
              </button>
              <button type="button" aria-label="Zoom fit">
                <Svg w={12} h={12}><path d="M1 3.500h10M1 8.500h10" stroke="#000" strokeWidth="2.500" /></Svg>
              </button>
              <button type="button" aria-label="Zoom cursor baseline">{icons.bracket}</button>
              <button type="button" aria-label="Zoom back">
                <Svg w={14} h={10}><path d="M1 1v7h7L6 6c3-2 5-1 6 3C13 2 8-1 3 3z" fill="#15852a" stroke="#0e5a1c" /></Svg>
              </button>
              <button type="button" aria-label="Zoom forward">
                <Svg w={14} h={10} dim><path d="M13 1v7H6l2-2C5 4 3 5 2 9C1 2 6-1 11 3z" fill="#15852a" stroke="#0e5a1c" /></Svg>
              </button>
              <button type="button" aria-label="Zoom selection">
                <Svg w={10} h={10}><path d="M1 1h7v7H1zM4 4h1.500v1.500H4z" stroke="#000" strokeWidth="1.600" /></Svg>
              </button>
            </div>
          </Bar>
        </div>

        <main className="flex min-h-[602px] flex-1 border-b border-[#8e8e8e] pt-[3px]">
          <SideTabs />

          <div className="ml-[5px] flex w-[319px] shrink-0 flex-col">
            <div className="flex h-[61px] shrink-0 flex-col pt-[11px] text-[13px] leading-[19px]">
              <div className="flex items-center">
                <button type="button" aria-label="Zoom baseline" className={`flex size-[19px] items-center justify-center ${raised}`}>
                  <Svg w={15} h={15}>
                    <g transform="scale(.7)"><Lens x={9} y={9} r={7} /></g>
                    <path d="M4 4h4v3H4z" fill="#d22" />
                  </Svg>
                </button>
                <span className="ml-[45px] flex items-center gap-0.5">Baseline <Caret /> = 0</span>
              </div>
              <div className="flex items-center">
                <button type="button" aria-label="Zoom cursor to baseline" className={`flex size-[19px] items-center justify-center ${raised}`}>
                  {icons.bracket}
                </button>
                <span className="ml-0.5 flex items-center gap-0.5">Cursor-Baseline <Caret /> = 100ps</span>
              </div>
            </div>

            <div className="flex flex-1">
              <section className="flex w-[218px] shrink-0 flex-col">
                <div className="flex h-[25px] shrink-0 items-center justify-between bg-[#b2b2b2] pr-[5px] pl-[3px] text-[15px]">
                  Name
                  <GearMenu label="Name column options" />
                </div>
                <div className="relative flex-1 bg-black">
                  <ul>
                    {signals.map((s) => (
                      <SignalRow key={s.name} name={s.name} bus={s.bus} marked={s.marked} />
                    ))}
                  </ul>
                  <svg className="absolute top-0 left-0 h-[489px] w-[218px]" viewBox="45 287 218 489" fill="none" aria-hidden="true">
                    <path d="M45 411H263" stroke="#ff0000" strokeWidth="1.500" />
                    <path d="M61 411.500l4.500-5l4.500 5z" fill="#ff0000" />
                    <g stroke="#fff" strokeWidth="5" strokeLinecap="round">
                      {pointerStrokes.map((p, i) => (
                        <path key={i} d={smooth(p)} />
                      ))}
                    </g>
                  </svg>
                  <div className="absolute top-36 left-[134px] w-20 text-center text-[35px] leading-10 text-white">
                    <p>Cout</p>
                    <p>F</p>
                    <p>Q</p>
                    <p>a</p>
                    <p>b</p>
                  </div>
                </div>
                <div className="flex h-6 shrink-0 items-center bg-[#bdbdbd] px-0.5">
                  <ArrowButton dir="left" />
                  <div className={`mx-0.5 h-5 flex-1 ${raised}`} />
                  <ArrowButton dir="right" />
                </div>
              </section>

              <section className="ml-2 flex flex-1 flex-col">
                <div className="flex h-[25px] shrink-0 items-center justify-between bg-[#b2b2b2] pr-[5px] pl-1 text-[15px]">
                  Cursor
                  <GearMenu label="Cursor column options" />
                </div>
                <ul className="flex-1 bg-black font-['Liberation_Mono',monospace] text-[12px] leading-[26px] text-white">
                  {signals.map((s) => (
                    <li key={s.name} className={`h-[25px] pl-[3px] whitespace-pre ${s.marked ? "bg-[#333]" : ""}`}>
                      {s.value}
                    </li>
                  ))}
                </ul>
                <div className="flex h-6 shrink-0 items-center">
                  <div className="flex h-full w-[71px] items-center bg-[#bdbdbd] px-0.5">
                    <ArrowButton dir="left" />
                    <div className={`mx-0.5 h-5 flex-1 ${raised}`} />
                    <ArrowButton dir="right" />
                  </div>
                  <button type="button" aria-label="Align values" className="ml-[6px]">
                    <Svg w={14} h={14}>
                      <path d="M1 0v14M2 2h5M2 5h10M2 8h8M2 11h11" stroke="#222" strokeWidth="1.500" />
                    </Svg>
                  </button>
                </div>
              </section>
            </div>
          </div>

          <section className="ml-2 flex min-w-0 flex-1 flex-col">
            <WaveCanvas />
            <Overview />
          </section>

          <div className="flex w-[18px] shrink-0 flex-col">
            <div className="h-[87px] shrink-0 border-b border-[#8e8e8e]" />
            <div className="flex flex-1 flex-col items-center bg-[#bdbdbd]">
              <ArrowButton dir="up" />
              <div className={`w-3.5 flex-1 ${raised}`} />
              <ArrowButton dir="down" />
            </div>
            <div className="h-6 shrink-0" />
          </div>
        </main>

        <footer className="mt-1 flex h-[28px] shrink-0 items-center border-t-2 border-b-2 border-t-[#8e8e8e] border-b-white text-[15px]">
          <button type="button" aria-label="Target" className="flex h-full w-[25px] items-center justify-center border-r-2 border-[#a0a0a0]">
            {icons.target}
          </button>
          <button type="button" aria-label="Links" className="flex h-full w-[27px] items-center justify-center border-r-2 border-[#a0a0a0]">
            {icons.relink}
          </button>
          <button type="button" aria-label="Save" className="flex h-full w-[26px] items-center justify-center border-r-2 border-[#a0a0a0]">
            {icons.disk}
          </button>
          <span className="ml-auto flex h-full items-center border-l-2 border-[#a0a0a0] px-1.5 whitespace-pre">0  objects selected</span>
        </footer>
      </div>
    </div>
  );
}
